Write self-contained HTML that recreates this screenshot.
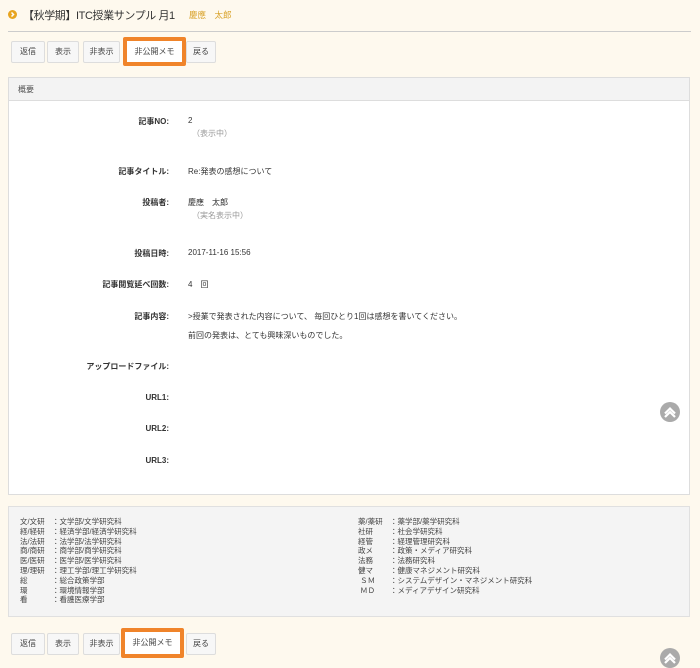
<!DOCTYPE html>
<html><head><meta charset="utf-8"><style>
body{margin:0;width:700px;height:664px;background:#fef9ee;font-family:"Liberation Sans","Noto Sans CJK JP",sans-serif;color:#333;position:relative;overflow:hidden}
.a{position:absolute;white-space:nowrap}
.btn{position:absolute;height:20px;line-height:20px;background:#f7f7f7;border:1px solid #ddd;border-radius:2px;font-size:8px;text-align:center;color:#444}
.hl{border:4px solid #f0842a;background:#fff}
.lab{position:absolute;right:531px;font-size:8px;font-weight:bold;color:#333;white-space:nowrap}
.val{position:absolute;left:188px;font-size:8px;color:#333;white-space:nowrap}
.sub{color:#999}
.up{position:absolute;width:20px;height:20px;border-radius:50%;background:#aaa}
.leg{font-size:7.5px;line-height:9.8px;color:#444;position:absolute}
</style></head><body>
<div class="a" style="left:8px;top:10px;width:9px;height:9px;border-radius:50%;background:#e8a520"></div>
<svg class="a" style="left:8px;top:10px" width="9" height="9"><path d="M3.5 2.5 L5.5 4.5 L3.5 6.5" stroke="#fff" stroke-width="1.5" fill="none"/></svg>
<div class="a" style="left:23px;top:7px;font-size:11px;letter-spacing:-0.4px;color:#333">【秋学期】ITC授業サンプル 月1</div>
<div class="a" style="left:189px;top:9px;font-size:8.5px;color:#d9a32b">慶應　太郎</div>
<div class="a" style="left:8px;top:31px;width:683px;height:1px;background:#ccc"></div>

<div class="btn" style="left:11px;top:41px;width:32px">返信</div>
<div class="btn" style="left:47px;top:41px;width:30px">表示</div>
<div class="btn" style="left:83px;top:41px;width:35px">非表示</div>
<div class="btn hl" style="left:123px;top:37px;width:55px;height:21px;line-height:21px">非公開メモ</div>
<div class="btn" style="left:186px;top:41px;width:28px">戻る</div>

<div class="a" style="left:8px;top:77px;width:680px;height:416px;background:#fff;border:1px solid #ddd"></div>
<div class="a" style="left:9px;top:78px;width:680px;height:22px;background:#f3f3f3;border-bottom:1px solid #ddd"></div>
<div class="a" style="left:18px;top:84px;font-size:8px;color:#555">概要</div>

<div class="lab" style="top:116px">記事NO:</div><div class="val" style="top:116px">2</div>
<div class="val sub" style="top:128px;left:192px">（表示中）</div>
<div class="lab" style="top:166px">記事タイトル:</div><div class="val" style="top:166px">Re:発表の感想について</div>
<div class="lab" style="top:197px">投稿者:</div><div class="val" style="top:197px">慶應　太郎</div>
<div class="val sub" style="top:210px;left:192px">（実名表示中）</div>
<div class="lab" style="top:248px">投稿日時:</div><div class="val" style="top:248px">2017-11-16 15:56</div>
<div class="lab" style="top:279px">記事閲覧延べ回数:</div><div class="val" style="top:279px">4　回</div>
<div class="lab" style="top:311px">記事内容:</div><div class="val" style="top:311px">&gt;授業で発表された内容について、 毎回ひとり1回は感想を書いてください。</div>
<div class="val" style="top:330px">前回の発表は、とても興味深いものでした。</div>
<div class="lab" style="top:361px">アップロードファイル:</div>
<div class="lab" style="top:393px">URL1:</div>
<div class="lab" style="top:424px">URL2:</div>
<div class="lab" style="top:456px">URL3:</div>

<div class="up" style="left:660px;top:402px"></div>
<svg class="a" style="left:660px;top:402px" width="20" height="20"><path d="M5 11.5 L10 6.5 L15 11.5 M5 15 L10 10 L15 15" stroke="#fff" stroke-width="2.2" fill="none"/></svg>

<div class="a" style="left:8px;top:506px;width:680px;height:109px;background:#f4f4f4;border:1px solid #e0e0e0"></div>
<div class="leg" style="left:20px;top:517px">文/文研<br>経/経研<br>法/法研<br>商/商研<br>医/医研<br>理/理研<br>総<br>環<br>看</div>
<div class="leg" style="left:52px;top:517px">：文学部/文学研究科<br>：経済学部/経済学研究科<br>：法学部/法学研究科<br>：商学部/商学研究科<br>：医学部/医学研究科<br>：理工学部/理工学研究科<br>：総合政策学部<br>：環境情報学部<br>：看護医療学部</div>
<div class="leg" style="left:358px;top:517px">薬/薬研<br>社研<br>経管<br>政メ<br>法務<br>健マ<br>&nbsp;ＳＭ<br>&nbsp;ＭＤ</div>
<div class="leg" style="left:390px;top:517px">：薬学部/薬学研究科<br>：社会学研究科<br>：経理管理研究科<br>：政策・メディア研究科<br>：法務研究科<br>：健康マネジメント研究科<br>：システムデザイン・マネジメント研究科<br>：メディアデザイン研究科</div>

<div class="btn" style="left:11px;top:633px;width:32px">返信</div>
<div class="btn" style="left:47px;top:633px;width:30px">表示</div>
<div class="btn" style="left:83px;top:633px;width:35px">非表示</div>
<div class="btn hl" style="left:121px;top:628px;width:55px;height:22px;line-height:22px">非公開メモ</div>
<div class="btn" style="left:186px;top:633px;width:28px">戻る</div>

<div class="up" style="left:660px;top:648px"></div>
<svg class="a" style="left:660px;top:648px" width="20" height="20"><path d="M5 11.5 L10 6.5 L15 11.5 M5 15 L10 10 L15 15" stroke="#fff" stroke-width="2.2" fill="none"/></svg>
</body></html>
